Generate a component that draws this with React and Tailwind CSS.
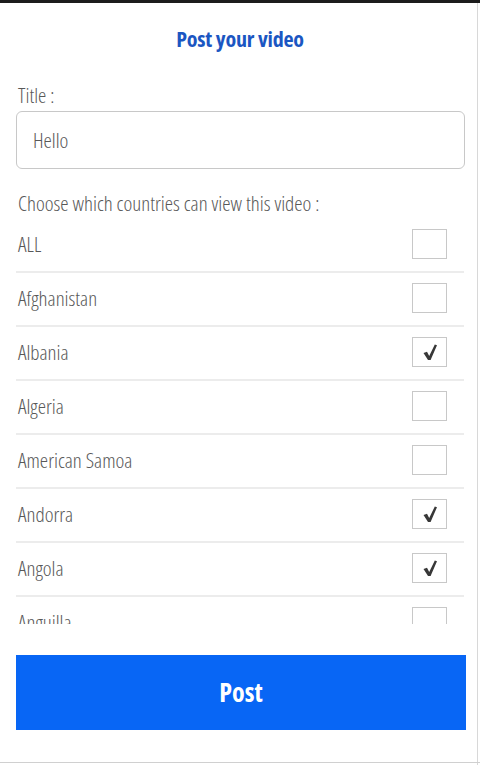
import React from "react";

const countries = [
  { name: "ALL", checked: false },
  { name: "Afghanistan", checked: false },
  { name: "Albania", checked: true },
  { name: "Algeria", checked: false },
  { name: "American Samoa", checked: false },
  { name: "Andorra", checked: true },
  { name: "Angola", checked: true },
  { name: "Anguilla", checked: false },
  { name: "Antarctica", checked: false },
];

function Check() {
  return (
    <svg width="16" height="18" viewBox="0 0 16 18">
      <path d="M1.5 10 L5 8.8 L7.2 13 L12.8 1.5 L15 2.2 L8.6 17 L6 17 Z" fill="#383838" />
    </svg>
  );
}

export default function App() {
  const font = { fontFamily: '"Open Sans", "Liberation Sans", sans-serif' };
  return (
    <div className="w-[480px] h-[765px] bg-white relative overflow-hidden" style={font}>
      <div className="h-[3px] bg-[#1c1c1c]" />
      <div className="absolute right-[2px] top-[3px] bottom-0 w-px bg-[#d8d8d8]" />
      <div className="absolute left-0 right-0 bottom-[2px] h-px bg-[#d0d0d0]" />
      <div className="flex flex-col px-4">
        <div className="h-[73px] flex items-center justify-center pb-[3px]">
          <span className="text-[22px] font-bold font-stretch-condensed text-[#1b56c2] tracking-[-0.2px]">
            Post your video
          </span>
        </div>
        <div className="h-[35px] flex items-center px-[2px] pt-[4px] text-[21px] font-light font-stretch-condensed text-[#585858]">
          Title :
        </div>
        <div className="h-[58px] border border-[#c8c8c8] rounded-[6px] flex items-center px-[16px] pt-[2px] text-[21px] font-light font-stretch-condensed text-[#585858] mr-[-1px]">
          Hello
        </div>
        <div className="h-[50px] flex items-end pb-0 px-[2px] text-[21px] font-light font-stretch-condensed text-[#585858]">
          Choose which countries can view this video :
        </div>
        <div className="h-[405px] overflow-hidden">
          {countries.map((c) => (
            <div
              key={c.name}
              className="h-[54px] flex items-center justify-between border-b-2 border-[#ececec] pl-[2px] pr-[17px]"
            >
              <span className="text-[21px] font-light font-stretch-condensed text-[#585858]">{c.name}</span>
              <div className="w-[35px] h-[30px] mb-[2px] border border-[#c8c8c8] flex items-center justify-center">
                {c.checked && <Check />}
              </div>
            </div>
          ))}
        </div>
        <div className="h-[31px]" />
        <button className="h-[75px] w-[450px] bg-[#0866f5] text-white text-[26px] font-bold font-stretch-condensed flex items-center justify-center">
          Post
        </button>
      </div>
    </div>
  );
}
